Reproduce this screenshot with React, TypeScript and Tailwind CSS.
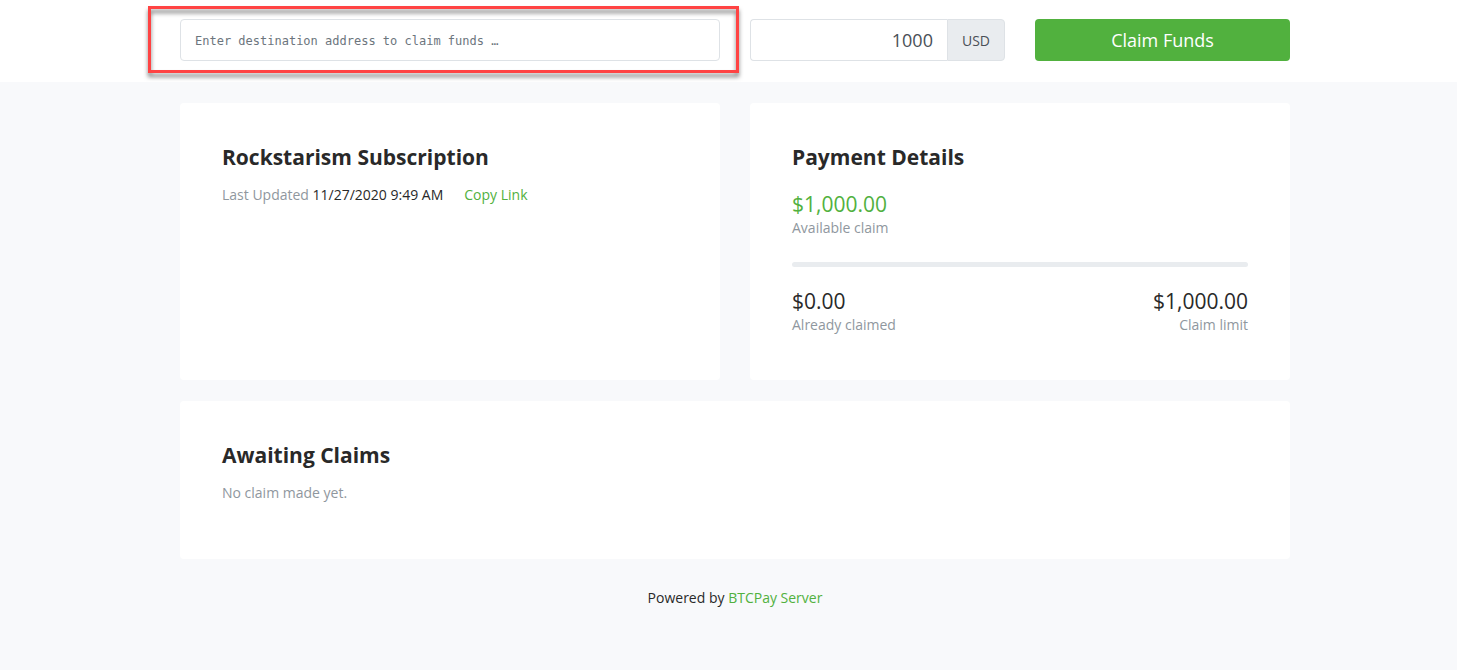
import { useState } from "react";
import type { FormEvent, ReactNode } from "react";

const claim = {
  title: "Rockstarism Subscription",
  lastUpdated: "11/27/2020 9:49 AM",
  currency: "USD",
  available: "$1,000.00",
  claimed: "$0.00",
  limit: "$1,000.00",
  percent: 0,
};

function Card({ title, children }: { title: string; children: ReactNode }) {
  return (
    <section className="rounded bg-white p-[42px]">
      <h2 className="text-[21px] leading-[25px] font-bold">{title}</h2>
      {children}
    </section>
  );
}

function Amount({ value, label, className = "" }: { value: string; label: string; className?: string }) {
  return (
    <div>
      <div className={`text-[21px] leading-[25px] ${className}`}>{value}</div>
      <div className="text-[#8f979e]">{label}</div>
    </div>
  );
}

export default function App() {
  const [destination, setDestination] = useState("");
  const [amount, setAmount] = useState("1000");

  const onSubmit = (e: FormEvent) => {
    e.preventDefault();
  };

  return (
    <div className="min-h-screen bg-[#f8f9fb] font-['Open_Sans',sans-serif] text-[14px] leading-[21px] text-[#292929]">
      <header className="bg-white pt-[19px] pb-[21px] pl-[13px]">
        <form
          onSubmit={onSubmit}
          className="mx-auto grid max-w-[1110px] grid-cols-1 gap-[30px] md:grid-cols-4"
        >
          <div className="relative md:col-span-2">
            <input
              type="text"
              aria-label="Destination address"
              value={destination}
              onChange={(e) => setDestination(e.target.value)}
              placeholder="Enter destination address to claim funds …"
              className="block h-[42px] w-full rounded border border-[#dee2e6] bg-white px-[14px] pt-[2px] font-['DejaVu_Sans_Mono',monospace] text-[12px] placeholder:text-[#6c757d]"
            />
            {/* highlight around the address field */}
            <div className="pointer-events-none absolute -top-[13px] -right-[19px] -bottom-[12px] -left-[32px] border-3 border-[#ff4343] drop-shadow-[0px_4px_2px_rgba(0,0,0,0.5)]" />
          </div>

          <div className="flex h-[42px]">
            <input
              type="text"
              inputMode="decimal"
              aria-label="Amount"
              value={amount}
              onChange={(e) => setAmount(e.target.value)}
              className="min-w-0 flex-1 rounded-l border border-r-0 border-[#dee2e6] bg-white px-[14px] text-right text-[18px] text-[#495057]"
            />
            <span className="flex items-center rounded-r border border-[#dee2e6] bg-[#e9ecef] px-[14px] pt-px text-[#495057]">
              {claim.currency}
            </span>
          </div>

          <button
            type="submit"
            className="h-[42px] rounded bg-[#51b13e] text-[18px] text-white hover:bg-[#449534]"
          >
            Claim Funds
          </button>
        </form>
      </header>

      <div className="pt-[21px] pl-[13px]">
        <main className="mx-auto grid max-w-[1110px] gap-[21px]">
          <div className="grid grid-cols-1 gap-[30px] md:grid-cols-2">
            <Card title={claim.title}>
              <p className="mt-[14px]">
                <span className="text-[#8f979e]">Last Updated</span> {claim.lastUpdated}
                <a href="#" className="ml-[21px] text-[#51b13e] hover:underline">
                  Copy Link
                </a>
              </p>
            </Card>

            <Card title="Payment Details">
              <div className="mt-[22px]">
                <Amount value={claim.available} label="Available claim" className="text-[#51b13e]" />
              </div>
              <div className="mt-6 mb-[22px] h-[5px] overflow-hidden rounded-full bg-[#e9ecef]">
                <div className="h-full bg-[#51b13e]" style={{ width: `${claim.percent}%` }} />
              </div>
              <div className="flex justify-between pb-[3px]">
                <Amount value={claim.claimed} label="Already claimed" />
                <div className="text-right">
                  <Amount value={claim.limit} label="Claim limit" />
                </div>
              </div>
            </Card>
          </div>

          <Card title="Awaiting Claims">
            <p className="my-[14px] text-[#8f979e]">No claim made yet.</p>
          </Card>
        </main>

        <footer className="py-7 text-center">
          Powered by{" "}
          <a href="#" className="text-[#51b13e] hover:underline">
            BTCPay Server
          </a>
        </footer>
      </div>
    </div>
  );
}
